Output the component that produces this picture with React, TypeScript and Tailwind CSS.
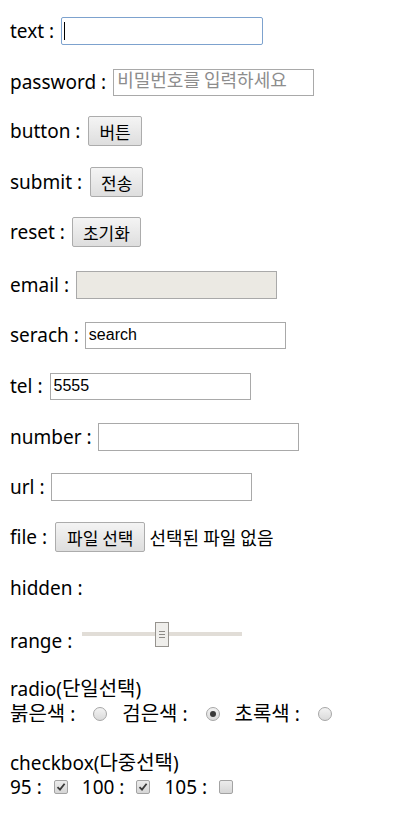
export default function App() {
  const inputBox =
    "h-[27px] w-[201px] border border-[#a9a9a9] bg-white px-[3px] text-[16px] text-black font-['Liberation_Sans',sans-serif] outline-none";
  const btn =
    "h-[30px] rounded-[2px] border border-[#acacac] bg-gradient-to-b from-[#f4f4f4] to-[#dedede] px-[10px] text-[17px] leading-none text-black font-['Noto_Sans_CJK_KR',sans-serif]";
  const row = "flex h-[30px] items-center";

  return (
    <div className="min-h-[825px] bg-white pl-[10px] pt-[16px] text-[19px] leading-[24px] text-black font-['Noto_Sans','Noto_Sans_CJK_KR',sans-serif]">
      <div className={row}>
        <span className="mr-[7px]">text :</span>
        <div className="flex h-[28px] w-[202px] items-center rounded-[2px] border border-[#7da2ce] bg-white px-[2px]">
          <span className="h-[18px] w-px bg-black" />
        </div>
      </div>

      <div className={`${row} mt-[21px]`}>
        <span className="mr-[7px]">password :</span>
        <input
          className={`${inputBox} placeholder:text-[18px] placeholder:text-[#8d8d8d] placeholder:font-['Noto_Sans_CJK_KR',sans-serif]`}
          type="password"
          placeholder="비밀번호를 입력하세요"
          readOnly
        />
      </div>

      <div className={`${row} mt-[19px]`}>
        <span className="mr-[8px]">button :</span>
        <button className={btn}>버튼</button>
      </div>

      <div className={`${row} mt-[21px]`}>
        <span className="mr-[8px]">submit :</span>
        <button className={btn}>전송</button>
      </div>

      <div className={`${row} mt-[20px]`}>
        <span className="mr-[7px]">reset :</span>
        <button className={btn}>초기화</button>
      </div>

      <div className={`${row} mt-[23px]`}>
        <span className="mr-[7px]">email :</span>
        <div className="h-[28px] w-[201px] border border-[#a9a9a9] bg-[#ebe9e3]" />
      </div>

      <div className={`${row} mt-[20px]`}>
        <span className="mr-[6px]">serach :</span>
        <input className={inputBox} defaultValue="search" readOnly />
      </div>

      <div className={`${row} mt-[21px]`}>
        <span className="mr-[7px]">tel :</span>
        <input className={inputBox} defaultValue="5555" readOnly />
      </div>

      <div className={`${row} mt-[21px]`}>
        <span className="mr-[6px]">number :</span>
        <input className={`${inputBox} h-[28px]`} readOnly />
      </div>

      <div className={`${row} mt-[20px]`}>
        <span className="mr-[6px]">url :</span>
        <input className={`${inputBox} h-[28px]`} readOnly />
      </div>

      <div className={`${row} mt-[20px]`}>
        <span className="mr-[8px]">file :</span>
        <button className={`${btn} px-[11px]`}>파일 선택</button>
        <span className="ml-[4px] text-[18px] font-['Noto_Sans_CJK_KR',sans-serif]">선택된 파일 없음</span>
      </div>

      <div className={`${row} mt-[21px]`}>
        <span>hidden :</span>
      </div>

      <div className={`${row} mt-[23px]`}>
        <span className="mr-[10px]">range :</span>
        <div className="relative mb-[14px] h-[25px] w-[160px]">
          <div className="absolute left-0 right-0 top-[10px] h-[4px] bg-[#e1ddd7]" />
          <div className="absolute left-[73px] top-0 flex h-[25px] w-[14px] flex-col items-center justify-center gap-[2px] border border-[#96938e] bg-[#efeeeb]">
            <span className="h-px w-[6px] bg-[#8c8a86]" />
            <span className="h-px w-[6px] bg-[#8c8a86]" />
            <span className="h-px w-[6px] bg-[#8c8a86]" />
          </div>
        </div>
      </div>

      <div className="mt-[20px] h-[25px] leading-[25px]">
        radio(<span className="text-[20px]">단일선택</span>)
      </div>
      <div className="flex h-[25px] items-center">
        <span>
          <span className="text-[20px]">붉은색</span> :
        </span>
        <Radio />
        <span>
          <span className="text-[20px]">검은색</span> :
        </span>
        <Radio checked />
        <span>
          <span className="text-[20px]">초록색</span> :
        </span>
        <Radio />
      </div>

      <div className="mt-[25px] h-[24px]">
        checkbox(<span className="text-[20px]">다중선택</span>)
      </div>
      <div className="flex h-[24px] items-center">
        <span>95 :</span>
        <Check checked />
        <span>100 :</span>
        <Check checked />
        <span>105 :</span>
        <Check />
      </div>
    </div>
  );
}

function Radio({ checked = false }: { checked?: boolean }) {
  return (
    <span className="ml-[18px] mr-[15px] flex h-[14px] w-[14px] items-center justify-center rounded-full border border-[#a6a6a6] bg-gradient-to-b from-[#f3f3f3] to-[#dadada]">
      {checked && <span className="h-[6px] w-[6px] rounded-full bg-[#3a3a3a]" />}
    </span>
  );
}

function Check({ checked = false }: { checked?: boolean }) {
  return (
    <span className="ml-[12px] mr-[14px] flex h-[14px] w-[14px] items-center justify-center rounded-[2px] border border-[#a3a3a3] bg-gradient-to-b from-[#ececec] to-[#d6d6d6]">
      {checked && (
        <svg width="10" height="10" viewBox="0 0 10 10">
          <path d="M1.5 5.2 L4 7.6 L8.6 1.8" fill="none" stroke="#3b3b3b" strokeWidth="1.8" />
        </svg>
      )}
    </span>
  );
}
